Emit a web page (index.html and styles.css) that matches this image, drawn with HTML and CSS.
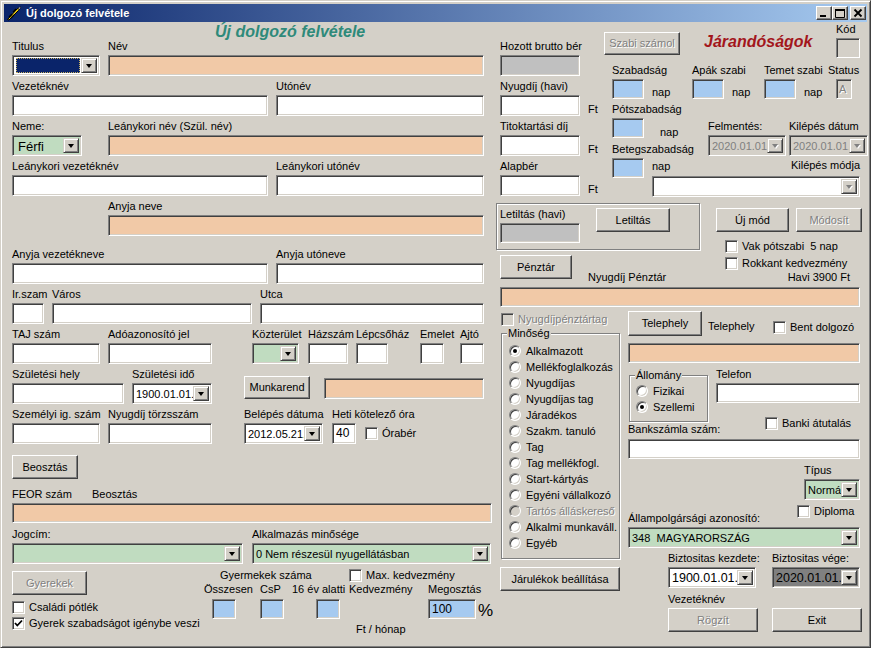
FILE: index.html
```html
<!DOCTYPE html>
<html lang="hu">
<head>
<meta charset="utf-8">
<title>Új dolgozó felvétele</title>
<link rel="stylesheet" href="styles.css">
</head>
<body>
<div class="window">
  <div class="titlebar">
    <svg class="appicon" width="16" height="16" viewBox="0 0 16 16">
      <path d="M1.5 14.5 L11 4 L14.5 2 L12.5 5.5 L3 15 Z" fill="#f2d21a" stroke="#000" stroke-width="1"/>
      <path d="M3 12 L6 9 M5 13 L8 10 M7 7 L10 4" stroke="#000" stroke-width="1.2"/>
      <path d="M12.5 3 L14.5 2 L13.5 4 Z" fill="#fff"/>
    </svg>
    <span class="title">Új dolgozó felvétele</span>
    <div class="tbtns">
      <span class="tb"><svg width="14" height="12" viewBox="0 0 14 12"><rect x="3" y="8" width="6" height="2" fill="#000"/></svg></span>
      <span class="tb"><svg width="14" height="12" viewBox="0 0 14 12"><path d="M2.5 2.5 H11.5 V10.5 H2.5 Z" fill="none" stroke="#000"/><rect x="2" y="2" width="10" height="2" fill="#000"/></svg></span>
      <span class="tb closeb"><svg width="14" height="12" viewBox="0 0 14 12"><path d="M3.5 2.5 L10.5 9.5 M10.5 2.5 L3.5 9.5" stroke="#000" stroke-width="1.8"/></svg></span>
    </div>
  </div>

  <div class="client">
    <!-- LEFT COLUMN -->
    <div class="leftcol">
      <div class="hdr">Új dolgozó felvétele</div>

      <div class="row first">
        <div class="f w96"><span class="lb">Titulus</span>
          <div class="cb w88"><span class="cbtxt"><span class="selfill"></span></span><span class="dd"></span></div>
        </div>
        <div class="f w376"><span class="lb">Név</span><div class="ed peach w376"></div></div>
      </div>

      <div class="row">
        <div class="f w264"><span class="lb">Vezetéknév</span><div class="ed w256"></div></div>
        <div class="f w208"><span class="lb">Utónév</span><div class="ed w208"></div></div>
      </div>

      <div class="row">
        <div class="f w96"><span class="lb">Neme:</span>
          <div class="cb green w70"><span class="cbtxt big">Férfi</span><span class="dd"></span></div>
        </div>
        <div class="f w376"><span class="lb">Leánykori név (Szül. név)</span><div class="ed peach w376"></div></div>
      </div>

      <div class="row">
        <div class="f w264"><span class="lb">Leánykori vezetéknév</span><div class="ed w256"></div></div>
        <div class="f w208"><span class="lb">Leánykori utónév</span><div class="ed w208"></div></div>
      </div>

      <div class="row">
        <div class="f w376 ml96"><span class="lb">Anyja neve</span><div class="ed peach w376"></div></div>
      </div>

      <div class="row mt12">
        <div class="f w264"><span class="lb">Anyja vezetékneve</span><div class="ed w256"></div></div>
        <div class="f w208"><span class="lb">Anyja utóneve</span><div class="ed w208"></div></div>
      </div>

      <div class="row">
        <div class="f w40"><span class="lb">Ir.szam</span><div class="ed w32"></div></div>
        <div class="f w208"><span class="lb">Város</span><div class="ed w200"></div></div>
        <div class="f w224"><span class="lb">Utca</span><div class="ed w224"></div></div>
      </div>

      <div class="row">
        <div class="f w96"><span class="lb">TAJ szám</span><div class="ed w88"></div></div>
        <div class="f w144"><span class="lb">Adóazonosító jel</span><div class="ed w104"></div></div>
        <div class="f w56"><span class="lb">Közterület</span>
          <div class="cb green w47"><span class="cbtxt"></span><span class="dd"></span></div>
        </div>
        <div class="f w48"><span class="lb">Házszám</span><div class="ed w40"></div></div>
        <div class="f w64"><span class="lb">Lépcsőház</span><div class="ed w32"></div></div>
        <div class="f w40"><span class="lb">Emelet</span><div class="ed w24"></div></div>
        <div class="f w24"><span class="lb">Ajtó</span><div class="ed w24"></div></div>
      </div>

      <div class="row">
        <div class="f w120"><span class="lb">Születési hely</span><div class="ed w112"></div></div>
        <div class="f w112"><span class="lb">Születési idő</span>
          <div class="cb w80"><span class="cbtxt">1900.01.01.</span><span class="dd"></span></div>
        </div>
        <div class="f w80"><div class="btn w66 munk">Munkarend</div></div>
        <div class="f w160"><div class="ed peach w160 munkpeach"></div></div>
      </div>

      <div class="row">
        <div class="f w96"><span class="lb">Személyi ig. szám</span><div class="ed w88"></div></div>
        <div class="f w136"><span class="lb">Nyugdíj törzsszám</span><div class="ed w104"></div></div>
        <div class="f w88"><span class="lb">Belépés dátuma</span>
          <div class="cb w79"><span class="cbtxt">2012.05.21.</span><span class="dd"></span></div>
        </div>
        <div class="f"><span class="lb">Heti kötelező óra</span>
          <div class="hrow"><div class="ed w24 num">40</div><div class="ck orab"><span class="box"></span>Órabér</div></div>
        </div>
      </div>

      <div class="btn w66 beo">Beosztás</div>

      <div class="feorlabels"><span class="w80">FEOR szám</span><span>Beosztás</span></div>
      <div class="ed peach w480 h20"></div>

      <div class="row mt5">
        <div class="f w240"><span class="lb">Jogcím:</span>
          <div class="cb green w231"><span class="cbtxt"></span><span class="dd"></span></div>
        </div>
        <div class="f w240"><span class="lb">Alkalmazás minősége</span>
          <div class="cb green w239"><span class="cbtxt">0 Nem részesül nyugellátásban</span><span class="dd"></span></div>
        </div>
      </div>

      <div class="bottom">
        <div class="bl">
          <div class="btn dis w75 gyer">Gyerekek</div>
          <div class="ck csal"><span class="box"></span>Családi pótlék</div>
          <div class="ck gysz"><span class="box"><svg width="9" height="9" viewBox="0 0 9 9"><path d="M1 4 L3.3 6.5 L8 1.5" fill="none" stroke="#000" stroke-width="1.8"/></svg></span>Gyerek szabadságot igénybe veszi</div>
        </div>
        <div class="br">
          <div class="gl1"><span class="w129">Gyermekek száma</span><div class="ck"><span class="box"></span>Max. kedvezmény</div></div>
          <div class="gl2"><span class="w56">Összesen</span><span class="w32">CsP</span><span class="w57">16 év alatti</span><span class="w79">Kedvezmény</span><span>Megosztás</span></div>
          <div class="gl3">
            <div class="ed blue h20 w24 ml12"></div>
            <div class="ed blue h20 w24 ml24"></div>
            <div class="ed blue h20 w24 ml32"></div>
            <div class="ed blue h20 w48 ml88 num">100</div>
            <span class="pct">%</span>
          </div>
          <div class="gl4">Ft / hónap</div>
        </div>
      </div>
    </div>

    <!-- RIGHT AREA -->
    <div class="rightcol">
      <div class="secA">
        <div class="a1">
          <div class="f"><span class="lb">Hozott brutto bér</span><div class="ed gray w80"></div></div>
          <div class="f mt4"><span class="lb">Nyugdíj (havi)</span><div class="ftrow"><div class="ed w80"></div><span class="ft">Ft</span></div></div>
          <div class="f mt4"><span class="lb">Titoktartási díj</span><div class="ftrow"><div class="ed w80"></div><span class="ft">Ft</span></div></div>
          <div class="f mt4"><span class="lb">Alapbér</span><div class="ftrow"><div class="ed w80"></div><span class="ft">Ft</span></div></div>
        </div>
        <div class="a2">
          <div class="a2top">
            <div class="btn dis szabi">Szabi számol</div>
            <div class="jar">Járandóságok</div>
            <div class="kod"><span class="lb">Kód</span><div class="ed disbg w24 h20"></div></div>
          </div>
          <div class="szrow">
            <div class="f w80"><span class="lb">Szabadság</span><div class="naprow"><div class="ed blue w32 h20"></div><span class="nap">nap</span></div></div>
            <div class="f w72"><span class="lb">Apák szabi</span><div class="naprow"><div class="ed blue w32 h20"></div><span class="nap">nap</span></div></div>
            <div class="f w64"><span class="lb">Temet szabi</span><div class="naprow"><div class="ed blue w32 h20"></div><span class="nap">nap</span></div></div>
            <div class="f"><span class="lb">Status</span><div class="ed disbg w16 h20 status">A</div></div>
          </div>
          <div class="lower">
            <div class="lowL">
              <span class="lb mt4">Pótszabadság</span>
              <div class="ed blue w32 h20"></div>
              <span class="lb mt5">Betegszabadság</span>
              <div class="ed blue w32 h20"></div>
            </div>
            <div class="lowR">
              <div class="lr1">
                <span class="nap nap1">nap</span>
                <div class="f w81 mt21"><span class="lb">Felmentés:</span>
                  <div class="cb disbg w78"><span class="cbtxt distx">2020.01.01.</span><span class="dd disarrow"></span></div>
                </div>
                <div class="f mt21"><span class="lb">Kilépés dátum</span>
                  <div class="cb disbg w79"><span class="cbtxt distx">2020.01.01.</span><span class="dd disarrow"></span></div>
                </div>
              </div>
              <div class="lr2"><span class="nap2">nap</span><span>Kilépés módja</span></div>
              <div class="cb w208 h20 kilmod"><span class="cbtxt"></span><span class="dd disarrow"></span></div>
            </div>
          </div>
        </div>
      </div>

      <div class="secB">
        <div class="bL">
          <div class="grp letil">
            <div class="f letf"><span class="lb">Letiltás (havi)</span><div class="ed gray w80 h20"></div></div>
            <div class="btn w74 letbtn">Letiltás</div>
          </div>
          <div class="penzrow">
            <div class="btn w72">Pénztár</div>
            <span class="npl">Nyugdíj Pénztár</span>
          </div>
        </div>
        <div class="bR">
          <div class="btnrow"><div class="btn w73">Új mód</div><div class="btn dis w66">Módosít</div></div>
          <div class="ck vak"><span class="box"></span>Vak pótszabi&nbsp;&nbsp;5 nap</div>
          <div class="ck rok"><span class="box"></span>Rokkant kedvezmény</div>
          <div class="havi">Havi 3900 Ft</div>
        </div>
      </div>
      <div class="ed peach w360 h20 penzed"></div>

      <div class="secC">
        <div class="cL">
          <div class="ck distx nyp"><span class="box disbox"></span>Nyugdíjpénztártag</div>
          <div class="grp minoseg"><span class="cap">Minőség</span>
            <div class="rd on"><span class="rb"></span>Alkalmazott</div>
            <div class="rd"><span class="rb"></span>Mellékfoglalkozás</div>
            <div class="rd"><span class="rb"></span>Nyugdíjas</div>
            <div class="rd"><span class="rb"></span>Nyugdíjas tag</div>
            <div class="rd"><span class="rb"></span>Járadékos</div>
            <div class="rd"><span class="rb"></span>Szakm. tanuló</div>
            <div class="rd"><span class="rb"></span>Tag</div>
            <div class="rd"><span class="rb"></span>Tag mellékfogl.</div>
            <div class="rd"><span class="rb"></span>Start-kártyás</div>
            <div class="rd"><span class="rb"></span>Egyéni vállalkozó</div>
            <div class="rd dis"><span class="rb"></span>Tartós álláskereső</div>
            <div class="rd"><span class="rb"></span>Alkalmi munkaváll.</div>
            <div class="rd"><span class="rb"></span>Egyéb</div>
          </div>
          <div class="btn w120 jarbtn">Járulékok beállítása</div>
        </div>

        <div class="cR">
          <div class="telrow">
            <div class="btn w74 telbtn">Telephely</div>
            <span class="tellab">Telephely</span>
            <div class="ck bent"><span class="box"></span>Bent dolgozó</div>
          </div>
          <div class="ed peach w232 h20 telpeach"></div>
          <div class="allrow">
            <div class="grp allomany"><span class="cap">Állomány</span>
              <div class="rd"><span class="rb"></span>Fizikai</div>
              <div class="rd on"><span class="rb"></span>Szellemi</div>
            </div>
            <div class="f telf"><span class="lb">Telefon</span><div class="ed w144 h20"></div></div>
          </div>
          <div class="bankrow">
            <span class="w137 banklab">Bankszámla szám:</span>
            <div class="ck banki"><span class="box"></span>Banki átutalás</div>
          </div>
          <div class="ed w232 h20 bankin"></div>
          <div class="f tipus"><span class="lb">Típus</span>
            <div class="cb green w56"><span class="cbtxt">Normál</span><span class="dd"></span></div>
          </div>
          <div class="diprow">
            <span class="w169 alllab">Állampolgársági azonosító:</span>
            <div class="ck dipl"><span class="box"></span>Diploma</div>
          </div>
          <div class="cb green w232 h20 allcb"><span class="cbtxt">348&nbsp; MAGYARORSZÁG</span><span class="dd"></span></div>
          <div class="row bizt">
            <div class="f w104"><span class="lb">Biztositas kezdete:</span>
              <div class="cb w88"><span class="cbtxt bigdate">1900.01.01.</span><span class="dd"></span></div>
            </div>
            <div class="f"><span class="lb">Biztositas vége:</span>
              <div class="cb dark w88"><span class="cbtxt bigdate">2020.01.01.</span><span class="dd"></span></div>
            </div>
          </div>
          <div class="vezlab">Vezetéknév</div>
          <div class="endbtns"><div class="btn dis w90">Rögzít</div><div class="btn w90">Exit</div></div>
        </div>
      </div>
    </div>
  </div>
</div>
</body>
</html>
```

FILE: styles.css
```css
* { box-sizing: border-box; }
html, body { margin: 0; padding: 0; }
body {
  font-family: "Liberation Sans", Arial, sans-serif;
  font-size: 11px;
  line-height: 13px;
  color: #000;
  background: #d4d0c8;
}

/* window frame */
.window {
  width: 871px;
  height: 648px;
  background: #d4d0c8;
  border: 1px solid;
  border-color: #d4d0c8 #404040 #404040 #d4d0c8;
  box-shadow: inset 1px 1px #fff, inset -1px -1px #808080;
  padding: 3px;
  overflow: hidden;
}
.titlebar {
  height: 18px;
  display: flex;
  align-items: center;
  background: linear-gradient(to right, #0a246a, #a6caf0);
  padding-left: 2px;
  padding-right: 1px;
}
.appicon { flex: none; }
.title { color: #fff; font-weight: bold; margin-left: 4px; flex: 1; white-space: nowrap; }
.tbtns { display: flex; }
.tb {
  width: 16px; height: 14px;
  background: #d4d0c8;
  border: 1px solid;
  border-color: #fff #404040 #404040 #fff;
  box-shadow: inset -1px -1px #808080;
  display: flex; align-items: center; justify-content: center;
}
.tb svg { display: block; }
.closeb { margin-left: 2px; }

.client { display: flex; padding-left: 8px; }

/* generic */
.leftcol { width: 480px; flex: none; }
.rightcol { width: 370px; flex: none; }
.hdr {
  height: 18px;
  padding-left: 203px;
  padding-top: 2px;
  font-size: 16px;
  line-height: 16px;
  font-weight: bold;
  font-style: italic;
  color: #2e8a7a;
  white-space: nowrap;
}
.row { display: flex; align-items: flex-start; margin-top: 4px; }
.row.first { margin-top: 0; }
.f { display: flex; flex-direction: column; flex: none; }
.lb { display: block; height: 15px; white-space: nowrap; }

.ed {
  height: 21px;
  flex: none;
  background: #fff;
  border: 1px solid;
  border-color: #808080 #fff #fff #808080;
  box-shadow: inset 1px 1px #404040, inset -1px -1px #d4d0c8;
  padding: 1px 3px;
  line-height: 17px;
  white-space: nowrap;
  overflow: hidden;
}
.h20 { height: 20px; line-height: 16px; }
.peach { background: #f1c9a7; }
.green { background: #c0dcc0; }
.blue { background: #a6caf0; }
.gray { background: #c0c0c0; }
.disbg { background: #d4d0c8; }
.dark { background: #808080; }
.num { font-size: 12px; padding-left: 3px; }
.status { color: #808080; text-shadow: 1px 1px #fff; padding: 1px 2px; }

.cb {
  height: 21px;
  flex: none;
  display: flex;
  background: #fff;
  border: 1px solid;
  border-color: #808080 #fff #fff #808080;
  box-shadow: inset 1px 1px #404040, inset -1px -1px #d4d0c8;
  padding: 2px;
}
.cb.green { background: #c0dcc0; }
.cb.disbg { background: #d4d0c8; }
.cb.dark { background: #808080; }
.cbtxt { flex: 1; min-width: 0; padding-left: 1px; line-height: 16px; white-space: nowrap; overflow: visible; }
.cbtxt.big { font-size: 13px; line-height: 17px; padding-left: 3px; }
.bigdate { font-size: 12.5px; }
.distx { color: #808080; }
.selfill { display: block; height: 100%; margin-right: 1px; background: #0a246a; outline: 1px dotted #c8b060; outline-offset: -1px; }
.dd {
  position: relative;
  width: 16px;
  flex: none;
  background: #d4d0c8;
  border: 1px solid;
  border-color: #d4d0c8 #404040 #404040 #d4d0c8;
  box-shadow: inset 1px 1px #fff, inset -1px -1px #808080;
  display: flex; align-items: center; justify-content: center;
}
.dd::after {
  content: "";
  border-style: solid;
  border-width: 4px 3.5px 0 3.5px;
  border-color: #000 transparent transparent transparent;
}
.dd.disarrow::after { border-top-color: #808080; filter: drop-shadow(1px 1px 0 #fff); }

.btn {
  height: 24px;
  flex: none;
  background: #d4d0c8;
  border: 1px solid;
  border-color: #fff #404040 #404040 #fff;
  box-shadow: inset -1px -1px #808080, inset 1px 1px #d4d0c8;
  display: flex; align-items: center; justify-content: center;
  white-space: nowrap;
}
.btn.dis { color: #808080; text-shadow: 1px 1px #fff; }

.ck { display: flex; align-items: center; height: 13px; white-space: nowrap; flex: none; }
.box {
  width: 13px; height: 13px; flex: none;
  margin-right: 4px;
  background: #fff;
  border: 1px solid;
  border-color: #808080 #fff #fff #808080;
  box-shadow: inset 1px 1px #404040, inset -1px -1px #d4d0c8;
  display: flex; align-items: center; justify-content: center;
}
.box svg { display: block; }
.disbox { background: #d4d0c8; }
.ck.distx { color: #808080; text-shadow: 1px 1px #fff; }

.grp {
  position: relative;
  border: 1px solid #808080;
  box-shadow: 1px 1px 0 #fff, inset 1px 1px 0 #fff;
}
.cap {
  position: absolute;
  top: -7px;
  left: 5px;
  padding: 0 1px;
  background: #d4d0c8;
  line-height: 13px;
}
.rd { display: flex; align-items: center; height: 16px; white-space: nowrap; }
.rb {
  width: 12px; height: 12px; flex: none;
  margin-right: 5px;
  border-radius: 50%;
  background: #fff;
  border: 1px solid;
  border-color: #808080 #fff #fff #808080;
  box-shadow: inset 1px 1px #404040, inset -1px -1px #d4d0c8;
  display: flex; align-items: center; justify-content: center;
}
.rd.on .rb::after { content: ""; width: 4px; height: 4px; border-radius: 50%; background: #000; }
.rd.dis { color: #808080; text-shadow: 1px 1px #fff; }
.rd.dis .rb { background: #d4d0c8; }

/* widths */
.w16{width:16px}.w24{width:24px}.w32{width:32px}.w40{width:40px}.w47{width:47px}.w48{width:48px}
.w56{width:56px}.w57{width:57px}.w64{width:64px}.w66{width:66px}.w70{width:70px}.w72{width:72px}
.w73{width:73px}.w74{width:74px}.w75{width:75px}.w78{width:78px}.w79{width:79px}.w80{width:80px}
.w81{width:81px}.w88{width:88px}.w90{width:90px}.w96{width:96px}.w104{width:104px}.w112{width:112px}
.w120{width:120px}.w129{width:129px}.w136{width:136px}.w137{width:137px}.w144{width:144px}
.w160{width:160px}.w169{width:169px}.w200{width:200px}.w208{width:208px}.w224{width:224px}
.w231{width:231px}.w232{width:232px}.w239{width:239px}.w240{width:240px}.w256{width:256px}
.w264{width:264px}.w360{width:360px}.w376{width:376px}.w480{width:480px}
.mt4{margin-top:4px}.mt5{margin-top:5px}.mt12{margin-top:12px}.mt21{margin-top:21px}
.ml96{margin-left:96px}.ml12{margin-left:12px}.ml24{margin-left:24px}.ml32{margin-left:32px}.ml88{margin-left:88px}

/* left column specifics */
.munk { margin-top: 8px; height: 23px; }
.munkpeach { margin-top: 10px; }
.hrow { display: flex; align-items: center; }
.orab { margin-left: 9px; }
.beo { margin-top: 11px; }
.feorlabels { display: flex; margin-top: 9px; height: 15px; white-space: nowrap; }
.feorlabels span { flex: none; }

.bottom { display: flex; }
.bl { width: 188px; flex: none; }
.gyer { margin-top: 7px; }
.csal { margin-top: 6px; }
.gysz { margin-top: 3px; }
.br { flex: 1; }
.gl1 { display: flex; margin-top: 5px; padding-left: 20px; height: 13px; white-space: nowrap; }
.gl1 > span { flex: none; }
.gl2 { display: flex; margin-top: 1px; padding-left: 4px; white-space: nowrap; }
.gl2 span { flex: none; }
.gl3 { display: flex; align-items: flex-end; margin-top: 3px; }
.pct { font-size: 17px; line-height: 17px; margin-left: 2px; }
.gl4 { margin-top: 4px; padding-left: 156px; }

/* right: section A */
.secA { display: flex; height: 174px; }
.a1 { width: 112px; flex: none; padding-left: 8px; padding-top: 18px; }
.ftrow { display: flex; align-items: flex-end; }
.ft { margin-left: 8px; }
.a2 { flex: 1; }
.a2top { display: flex; align-items: flex-start; height: 42px; }
.szabi { width: 76px; height: 23px; margin-top: 10px; }
.jar {
  margin-left: 24px; margin-top: 11px;
  font-size: 16px; line-height: 18px;
  font-weight: bold; font-style: italic;
  color: #a3161c;
  white-space: nowrap;
}
.kod { display: flex; flex-direction: column; margin-left: auto; margin-right: 2px; margin-top: 1px; }
.szrow { display: flex; padding-left: 8px; }
.naprow { display: flex; align-items: flex-end; }
.nap { margin-left: 8px; }
.status { margin-left: 8px; }
.lower { display: flex; padding-left: 8px; }
.lowL { width: 40px; flex: none; display: flex; flex-direction: column; }
.lowR { width: 208px; flex: none; }
.lr1 { display: flex; align-items: flex-start; height: 57px; }
.nap1 { width: 48px; flex: none; margin-top: 27px; }
.lr2 { display: flex; justify-content: space-between; margin-top: 3px; }
.nap2 { padding-top: 1px; }
.kilmod { margin-top: 3px; }

/* section B */
.secB { display: flex; }
.bL { width: 208px; flex: none; }
.letil { margin-left: 4px; margin-top: 7px; width: 204px; height: 47px; display: flex; align-items: flex-start; }
.letf { margin-left: 3px; margin-top: 4px; }
.letbtn { margin-left: 16px; margin-top: 4px; }
.penzrow { display: flex; margin-top: 5px; padding-left: 8px; }
.npl { margin-left: 16px; padding-top: 16px; white-space: nowrap; }
.bR { flex: 1; }
.btnrow { display: flex; margin-top: 12px; padding-left: 16px; }
.btnrow .btn + .btn { margin-left: 7px; }
.vak { margin-top: 8px; margin-left: 25px; }
.rok { margin-top: 4px; margin-left: 25px; }
.havi { margin-top: 1px; text-align: right; padding-right: 12px; }
.penzed { margin-top: 3px; margin-left: 8px; }

/* section C */
.secC { display: flex; }
.cL { width: 120px; flex: none; margin-left: 8px; }
.nyp { margin-top: 6px; margin-left: 1px; }
.minoseg { margin-top: 7px; margin-left: 1px; width: 119px; height: 226px; padding-top: 9px; padding-left: 7px; }
.jarbtn { margin-top: 8px; }
.cR { width: 234px; flex: none; margin-left: 8px; }
.telrow { display: flex; align-items: flex-start; margin-top: 4px; }
.telbtn { height: 25px; }
.tellab { margin-left: 6px; padding-top: 9px; width: 65px; flex: none; }
.bent { margin-top: 10px; }
.telpeach { margin-top: 7px; }
.allrow { display: flex; align-items: flex-start; height: 40px; }
.allomany { margin-top: 12px; margin-left: 1px; width: 79px; height: 47px; padding-top: 7px; padding-left: 6px; flex: none; }
.telf { margin-left: 8px; margin-top: 5px; }
.bankrow { display: flex; align-items: flex-start; }
.banklab { margin-top: 20px; flex: none; white-space: nowrap; }
.banki { margin-top: 14px; }
.bankin { margin-top: 3px; }
.tipus { margin-left: 176px; padding-top: 5px; }
.diprow { display: flex; align-items: flex-start; }
.alllab { margin-top: 12px; flex: none; white-space: nowrap; }
.dipl { margin-top: 5px; }
.allcb { margin-top: 2px; }
.bizt { margin-left: 40px; }
.vezlab { margin-left: 40px; margin-top: 5px; }
.endbtns { display: flex; margin-left: 40px; margin-top: 2px; }
.endbtns .btn + .btn { margin-left: 14px; }
```
